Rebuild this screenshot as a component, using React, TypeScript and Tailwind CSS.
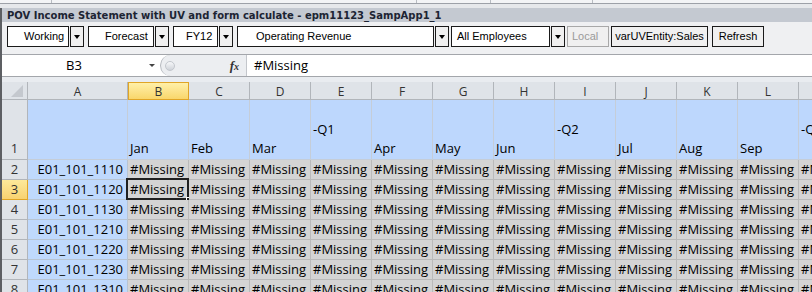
const cols = ["A", "B", "C", "D", "E", "F", "G", "H", "I", "J", "K", "L", "M"];
const heads = ["Jan", "Feb", "Mar", "-Q1", "Apr", "May", "Jun", "-Q2", "Jul", "Aug", "Sep", "-Q3"];
const rows = ["1110", "1120", "1130", "1210", "1220", "1230", "1310"];

function DropBox({ label, w, pl }: { label: string; w: string; pl: string }) {
  return (
    <div className="flex gap-[1px] h-[21px]">
      <div className={`${w} ${pl} h-full border border-[#1a1a1a] bg-white flex items-center`}>
        {label}
      </div>
      <div className="w-[14px] h-full border border-[#1a1a1a] bg-[#f0f0f0] flex items-center justify-center">
        <span className="w-0 h-0 border-l-[3px] border-r-[3px] border-t-[4px] border-l-transparent border-r-transparent border-t-black" />
      </div>
    </div>
  );
}

function Toolbar() {
  return (
    <div className="h-[32px] shrink-0 bg-[#eff0f2] flex items-start pt-[4px] pl-[5px] text-[11px] text-black font-['Liberation_Sans',Arial,sans-serif]">
      <DropBox label="Working" w="w-[62px]" pl="pl-[16px]" />
      <div className="w-[4px]" />
      <DropBox label="Forecast" w="w-[66px]" pl="pl-[16px]" />
      <div className="w-[4px]" />
      <DropBox label="FY12" w="w-[45px]" pl="pl-[12px]" />
      <div className="w-[4px]" />
      <DropBox label="Operating Revenue" w="w-[197px]" pl="pl-[18px]" />
      <div className="w-[2px]" />
      <DropBox label="All Employees" w="w-[99px]" pl="pl-[5px]" />
      <div className="w-[2px]" />
      <div className="w-[42px] h-[21px] border border-[#a8a8a8] bg-[#f0f0f0] text-[#9a9a9a] flex items-center pl-[4px] mr-[2px]">
        Local
      </div>
      <div className="w-[97px] h-[21px] border border-[#1a1a1a] bg-[#f0f0f0] flex items-center justify-center mr-[4px]">
        varUVEntity:Sales
      </div>
      <div className="w-[52px] h-[21px] border border-[#1a1a1a] bg-[#f0f0f0] flex items-center justify-center">
        Refresh
      </div>
    </div>
  );
}

function FormulaBar() {
  return (
    <div className="h-[23px] shrink-0 border-y border-[#a3a6ab] flex bg-white font-['Open_Sans',sans-serif] text-[13px] text-black">
      <div className="w-[158px] flex items-center relative">
        <span className="flex-1 text-center pr-[14px]">B3</span>
        <span className="absolute right-[5px] top-[9px] w-0 h-0 border-l-[3px] border-r-[3px] border-t-[3px] border-l-transparent border-r-transparent border-t-[#444]" />
      </div>
      <div className="w-[86px] bg-[#eceef1] rounded-l-[11px] border-l border-[#b4b8be] flex items-center justify-between pl-[4px] pr-[7px]">
        <span className="w-[10px] h-[10px] rounded-full bg-gradient-to-b from-[#f7f8fa] to-[#cfd3d9] border border-[#c3c7cd]" />
        <span className="font-['Liberation_Serif',serif] italic font-bold text-[13px] text-[#333]">
          f<span className="text-[10px]">x</span>
        </span>
      </div>
      <div className="flex-1 border-l border-[#c3c6cb] flex items-center pl-[7px]">#Missing</div>
    </div>
  );
}

function Grid() {
  return (
    <div className="flex flex-col shrink-0 font-['Open_Sans',sans-serif] text-[13px] text-black">
      <div className="flex h-[18px] text-[12px] text-[#333]">
        <div className="w-[26px] shrink-0 bg-[#dfe3e8] border-r border-b border-[#b1b5ba] flex items-end justify-end pr-[4px] pb-[2px]">
          <span className="w-0 h-0 border-l-[12px] border-l-transparent border-b-[12px] border-b-[#c4c8ce]" />
        </div>
        {cols.map((c) => (
          <div
            key={c}
            className={
              c === "B"
                ? "w-[61px] shrink-0 bg-gradient-to-b from-[#fff0a8] to-[#f9d66a] border border-[#e0a526] flex items-center justify-center pt-[2px]"
                : `${c === "A" ? "w-[100px]" : "w-[61px]"} shrink-0 bg-[#dfe3e8] border-r border-b border-[#b1b5ba] flex items-center justify-center pt-[2px]`
            }
          >
            {c}
          </div>
        ))}
      </div>
      <div className="flex h-[60px]">
        <div className="w-[26px] shrink-0 bg-[#dfe3e8] border-r border-b border-[#b1b5ba] flex items-end justify-center pb-[1px] text-[#333]">
          1
        </div>
        <div className="w-[100px] shrink-0 bg-[#bdd7fd] border-r border-b border-[#c5cdd8]" />
        {heads.map((h) => (
          <div
            key={h}
            className={`w-[61px] shrink-0 bg-[#bdd7fd] border-r border-b border-[#c5cdd8] flex items-end pl-[2px] whitespace-nowrap ${
              h.startsWith("-") ? "pb-[20px]" : "pb-[1px]"
            }`}
          >
            {h}
          </div>
        ))}
      </div>
      {rows.map((r, i) => {
        const sel = i === 1;
        return (
          <div key={r} className="flex h-[20px]">
            <div
              className={`w-[26px] shrink-0 border-r border-b flex items-end justify-center text-[#333] ${
                sel ? "bg-gradient-to-b from-[#fde99a] to-[#f8d270] border-[#e0a526]" : "bg-[#dfe3e8] border-[#b1b5ba]"
              }`}
            >
              {i + 2}
            </div>
            <div className="w-[100px] shrink-0 bg-[#bfd9fd] border-r border-b border-[#b8c4d2] flex items-end justify-end pr-[4px]">
              {`E01_101_${r}`}
            </div>
            {heads.map((h, j) => (
              <div
                key={h}
                className="w-[61px] shrink-0 bg-[#d4d4d4] border-r border-b border-[#bababa] flex items-end pl-[2px] whitespace-nowrap relative"
              >
                #Missing
                {sel && j === 0 && (
                  <span className="absolute -left-[2px] -top-[2px] w-[63px] h-[22px] border-2 border-[#202020]">
                    <span className="absolute -right-[4px] -bottom-[4px] w-[5px] h-[5px] bg-[#202020] border border-white" />
                  </span>
                )}
              </div>
            ))}
          </div>
        );
      })}
    </div>
  );
}

export default function App() {
  return (
    <div className="w-[812px] h-[292px] overflow-hidden bg-[#eff0f2] flex flex-col">
      <div className="h-[4px] shrink-0 flex bg-[#f3f4f6] border-b border-[#9da1a8]">
        <div className="w-[52px] border-r border-[#b8bcc2]" />
        <div className="w-[365px] border-r border-[#b8bcc2]" />
        <div className="w-[74px] border-r border-[#b8bcc2]" />
        <div className="w-[102px] border-r border-[#b8bcc2]" />
      </div>
      <div className="h-[4px] shrink-0 bg-[#e6e8eb]" />
      <div className="flex flex-1 min-h-0">
        <div className="w-[2px] shrink-0 bg-[#5d5f63]" />
        <div className="flex-1 min-w-0 flex flex-col">
          <div className="h-[14px] shrink-0 bg-[#c4c9d1] pl-[5px] pt-[1px] flex items-center text-[10px] font-bold text-[#1c2433] font-['DejaVu_Sans',sans-serif] whitespace-nowrap">
            POV Income Statement with UV and form calculate - epm11123_SampApp1_1
          </div>
          <Toolbar />
          <FormulaBar />
          <div className="h-[5px] shrink-0 bg-[#e9ecf0]" />
          <Grid />
        </div>
      </div>
    </div>
  );
}
